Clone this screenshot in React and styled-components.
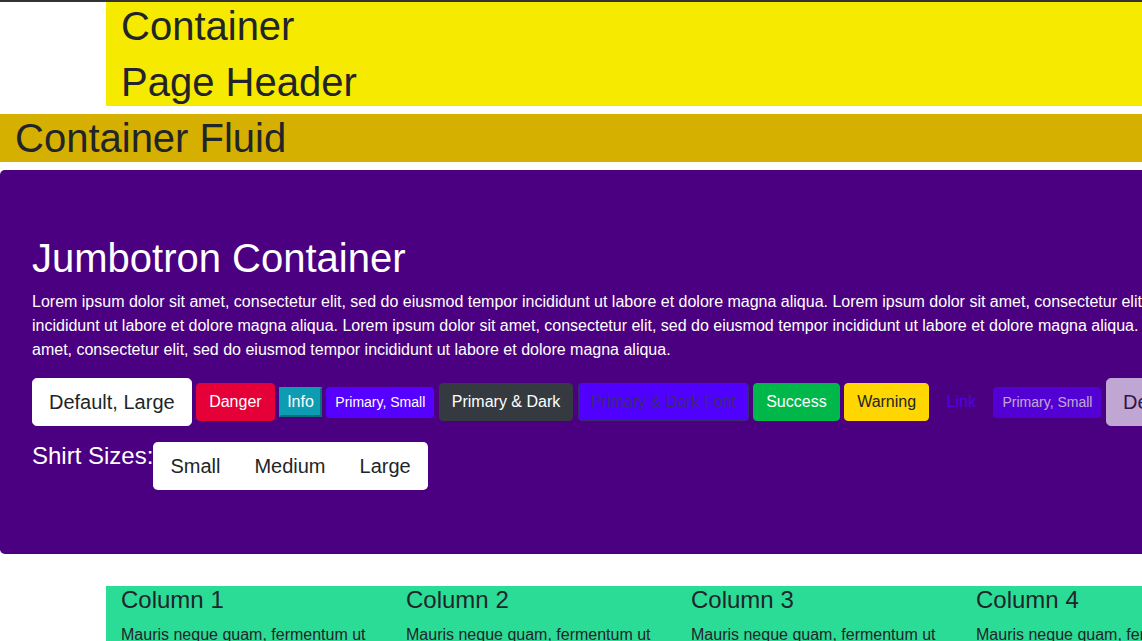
import React from "react";
import styled, { createGlobalStyle, css } from "styled-components";

const Global = createGlobalStyle`
  html, body { margin: 0; padding: 0; background: #fff; }
  body {
    font-family: "Liberation Sans", Arial, sans-serif;
    font-size: 16px;
    line-height: 1.5;
    color: #212529;
  }
  * { box-sizing: border-box; }
`;

const Page = styled.div`
  min-width: 1352px;
  border-top: 2px solid #333;
`;

const Container = styled.div`
  width: 1140px;
  margin: 0 auto 8px;
  padding: 0 15px;
  background: ${(p) => p.$bg || "transparent"};
`;

const Fluid = styled.div`
  width: 100%;
  padding: 0 15px;
  margin-bottom: 8px;
  background: #d6b000;
`;

const Heading = styled.h1`
  margin: 0 0 ${(p) => (p.$last ? 0 : 8)}px;
  font-size: 40px;
  font-weight: 400;
  line-height: 48px;
`;

const Jumbotron = styled.div`
  background: #4b0082;
  color: #fff;
  padding: 64px 32px;
  border-radius: 4.8px;
  margin-bottom: 32px;
`;

const Lead = styled.p`
  margin: 0 0 16px;
  font-size: 16px;
  line-height: 24px;
`;

const ButtonRow = styled.div`
  display: flex;
  flex-wrap: nowrap;
  align-items: center;
  gap: 4.5px;
  margin-bottom: 16px;
`;

const sizes = {
  lg: css`
    padding: 8px 16px;
    font-size: 20px;
    line-height: 30px;
    border-radius: 4.8px;
  `,
  md: css`
    padding: 6px 12px;
    font-size: 16px;
    line-height: 24px;
    border-radius: 4px;
  `,
  sm: css`
    padding: 4px 8px;
    font-size: 14px;
    line-height: 21px;
    border-radius: 3.2px;
  `,
};

const Btn = styled.button`
  font-family: inherit;
  font-weight: 400;
  white-space: nowrap;
  flex: none;
  border: 1px solid ${(p) => p.$border || p.$bg || "transparent"};
  background: ${(p) => p.$bg || "transparent"};
  color: ${(p) => p.$fg || "#fff"};
  opacity: ${(p) => (p.$disabled ? 0.65 : 1)};
  ${(p) => sizes[p.$size || "md"]}
`;

const RawButton = styled.button`
  flex: none;
  font-family: inherit;
  font-size: 16px;
  line-height: 24px;
  padding: 1px 6px;
  color: #fff;
  background: #0d9db2;
  border: 2px solid;
  border-color: #0d9db2 #0a6e7c #0a6e7c #0d9db2;
  border-radius: 0;
`;

const ShirtRow = styled.div`
  display: flex;
  align-items: flex-start;
`;

const ShirtLabel = styled.span`
  font-size: 24px;
  line-height: 28.8px;
`;

const Group = styled.div`
  display: flex;
  background: #fff;
  border-radius: 4.8px;
`;

const GroupBtn = styled.button`
  font-family: inherit;
  background: transparent;
  border: 1px solid transparent;
  color: #212529;
  padding: 8px 16px;
  font-size: 20px;
  line-height: 30px;
`;

const Row = styled.div`
  display: grid;
  grid-template-columns: repeat(4, 1fr);
  margin: 0 -15px;
`;

const Col = styled.div`
  padding: 0 15px;
`;

const ColTitle = styled.h4`
  margin: 0 0 8px;
  font-size: 24px;
  font-weight: 400;
  line-height: 28.8px;
`;

const ColText = styled.p`
  margin: 0 0 16px;
`;

const sentence =
  "Lorem ipsum dolor sit amet, consectetur elit, sed do eiusmod tempor incididunt ut labore et dolore magna aliqua.";

const mauris =
  "Mauris neque quam, fermentum ut nisl vitae, convallis maximus nisl. Sed mattis nunc id lorem euismod placerat. Vivamus porttitor magna enim, ac accumsan tortor cursus at.";

export default function App() {
  return (
    <>
      <Global />
      <Page>
        <Container $bg="#f6ea00">
          <Heading>Container</Heading>
          <Heading $last>Page Header</Heading>
        </Container>
        <Fluid>
          <Heading $last>Container Fluid</Heading>
        </Fluid>
        <Jumbotron>
          <Heading>Jumbotron Container</Heading>
          <Lead>{[sentence, sentence, sentence, sentence].join(" ")}</Lead>
          <ButtonRow>
            <Btn $size="lg" $bg="#fff" $fg="#212529">Default, Large</Btn>
            <Btn $bg="#e50037">Danger</Btn>
            <RawButton>Info</RawButton>
            <Btn $size="sm" $bg="#5600ff">Primary, Small</Btn>
            <Btn $bg="#343a40">Primary &amp; Dark</Btn>
            <Btn $bg="#5000ff" $border="#3b2b6e" $fg="#3b2b6e">Primary &amp; Dark Font</Btn>
            <Btn $bg="#00b84a">Success</Btn>
            <Btn $bg="#ffd600" $fg="#212529">Warning</Btn>
            <Btn $fg="#5000e6">Link</Btn>
            <Btn $size="sm" $bg="#5600ff" $disabled>Primary, Small</Btn>
            <Btn $size="lg" $bg="#fff" $fg="#212529" $disabled>Default, Large</Btn>
          </ButtonRow>
          <ShirtRow>
            <ShirtLabel>Shirt Sizes:</ShirtLabel>
            <Group>
              <GroupBtn>Small</GroupBtn>
              <GroupBtn>Medium</GroupBtn>
              <GroupBtn>Large</GroupBtn>
            </Group>
          </ShirtRow>
        </Jumbotron>
        <Container $bg="#2bdc97">
          <Row>
            {[1, 2, 3, 4].map((n) => (
              <Col key={n}>
                <ColTitle>Column {n}</ColTitle>
                <ColText>{mauris}</ColText>
              </Col>
            ))}
          </Row>
        </Container>
      </Page>
    </>
  );
}
